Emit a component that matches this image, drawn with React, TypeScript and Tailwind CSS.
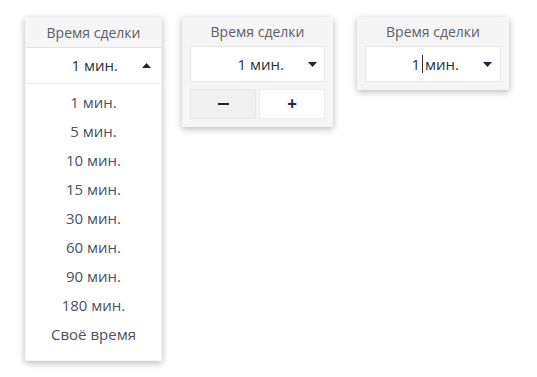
import { useState } from "react";

const OPTIONS = ["1 мин.", "5 мин.", "10 мин.", "15 мин.", "30 мин.", "60 мин.", "90 мин.", "180 мин.", "Своё время"];

const Caret = ({ up }: { up?: boolean }) => (
  <svg width="9" height="5" viewBox="0 0 9 5" className="shrink-0">
    {up ? <path d="M0 5 L4.5 0 L9 5 Z" fill="#1f2533" /> : <path d="M0 0 L9 0 L4.5 5 Z" fill="#1f2533" />}
  </svg>
);

const Header = () => (
  <div className="h-[29px] flex items-center justify-center text-[14px] text-[#5a5f68]">Время сделки</div>
);

export default function App() {
  const [value] = useState(OPTIONS[0]);

  return (
    <div
      className="w-[537px] h-[377px] bg-white flex items-start pl-[25px] pt-[17px]"
      style={{ fontFamily: '"Open Sans", "Noto Sans", sans-serif' }}
    >
      {/* Open dropdown */}
      <div className="w-[137px] bg-[#f5f5f5] shadow-[0_2px_7px_rgba(0,0,0,0.28)] flex flex-col">
        <div className="h-[30px] flex items-center justify-center text-[14px] text-[#5a5f68]">Время сделки</div>
        <div className="mx-[1px] mb-[1px] bg-white border-t border-[#e2e2e2] flex flex-col">
          <div className="h-[36px] flex items-center justify-end pr-[10px] border-b border-[#ececec]">
            <span className="text-[15px] text-[#2b303a] mr-[24px]">{value}</span>
            <Caret up />
          </div>
          <div className="pt-[4px] pb-[11px] flex flex-col">
            {OPTIONS.map((o) => (
              <div key={o} className="h-[29px] flex items-center justify-center text-[15px] text-[#4a525e]">
                {o}
              </div>
            ))}
          </div>
        </div>
      </div>

      {/* Stepper */}
      <div className="ml-[20px] w-[151px] bg-[#f5f5f5] shadow-[0_2px_7px_rgba(0,0,0,0.28)] px-[8px] pb-[8px] flex flex-col">
        <Header />
        <div className="h-[36px] bg-white border border-[#e6e6e6] flex items-center justify-end pr-[7px]">
          <span className="text-[15px] text-[#2b303a] mr-[24px]">{value}</span>
          <Caret />
        </div>
        <div className="mt-[7px] flex gap-[3px]">
          <button className="flex-1 h-[30px] bg-[#f0f0f0] border border-[#e6e6e6] flex items-center justify-center">
            <span className="block w-[11px] h-[2px] bg-[#1f2640]" />
          </button>
          <button className="flex-1 h-[30px] bg-white border border-[#ececec] flex items-center justify-center text-[17px] font-bold text-[#1f2640]">
            +
          </button>
        </div>
      </div>

      {/* Custom input */}
      <div className="ml-[24px] w-[152px] bg-[#f5f5f5] shadow-[0_2px_7px_rgba(0,0,0,0.28)] px-[8px] pb-[8px] flex flex-col">
        <Header />
        <div className="h-[36px] bg-white border border-[#e6e6e6] flex items-center justify-end pr-[8px]">
          <span className="text-[15px] text-[#2b303a] mr-[24px] flex items-center">
            1<span className="inline-block w-[1px] h-[18px] bg-[#2b303a] mx-[2px]" />мин.
          </span>
          <Caret />
        </div>
      </div>
    </div>
  );
}
